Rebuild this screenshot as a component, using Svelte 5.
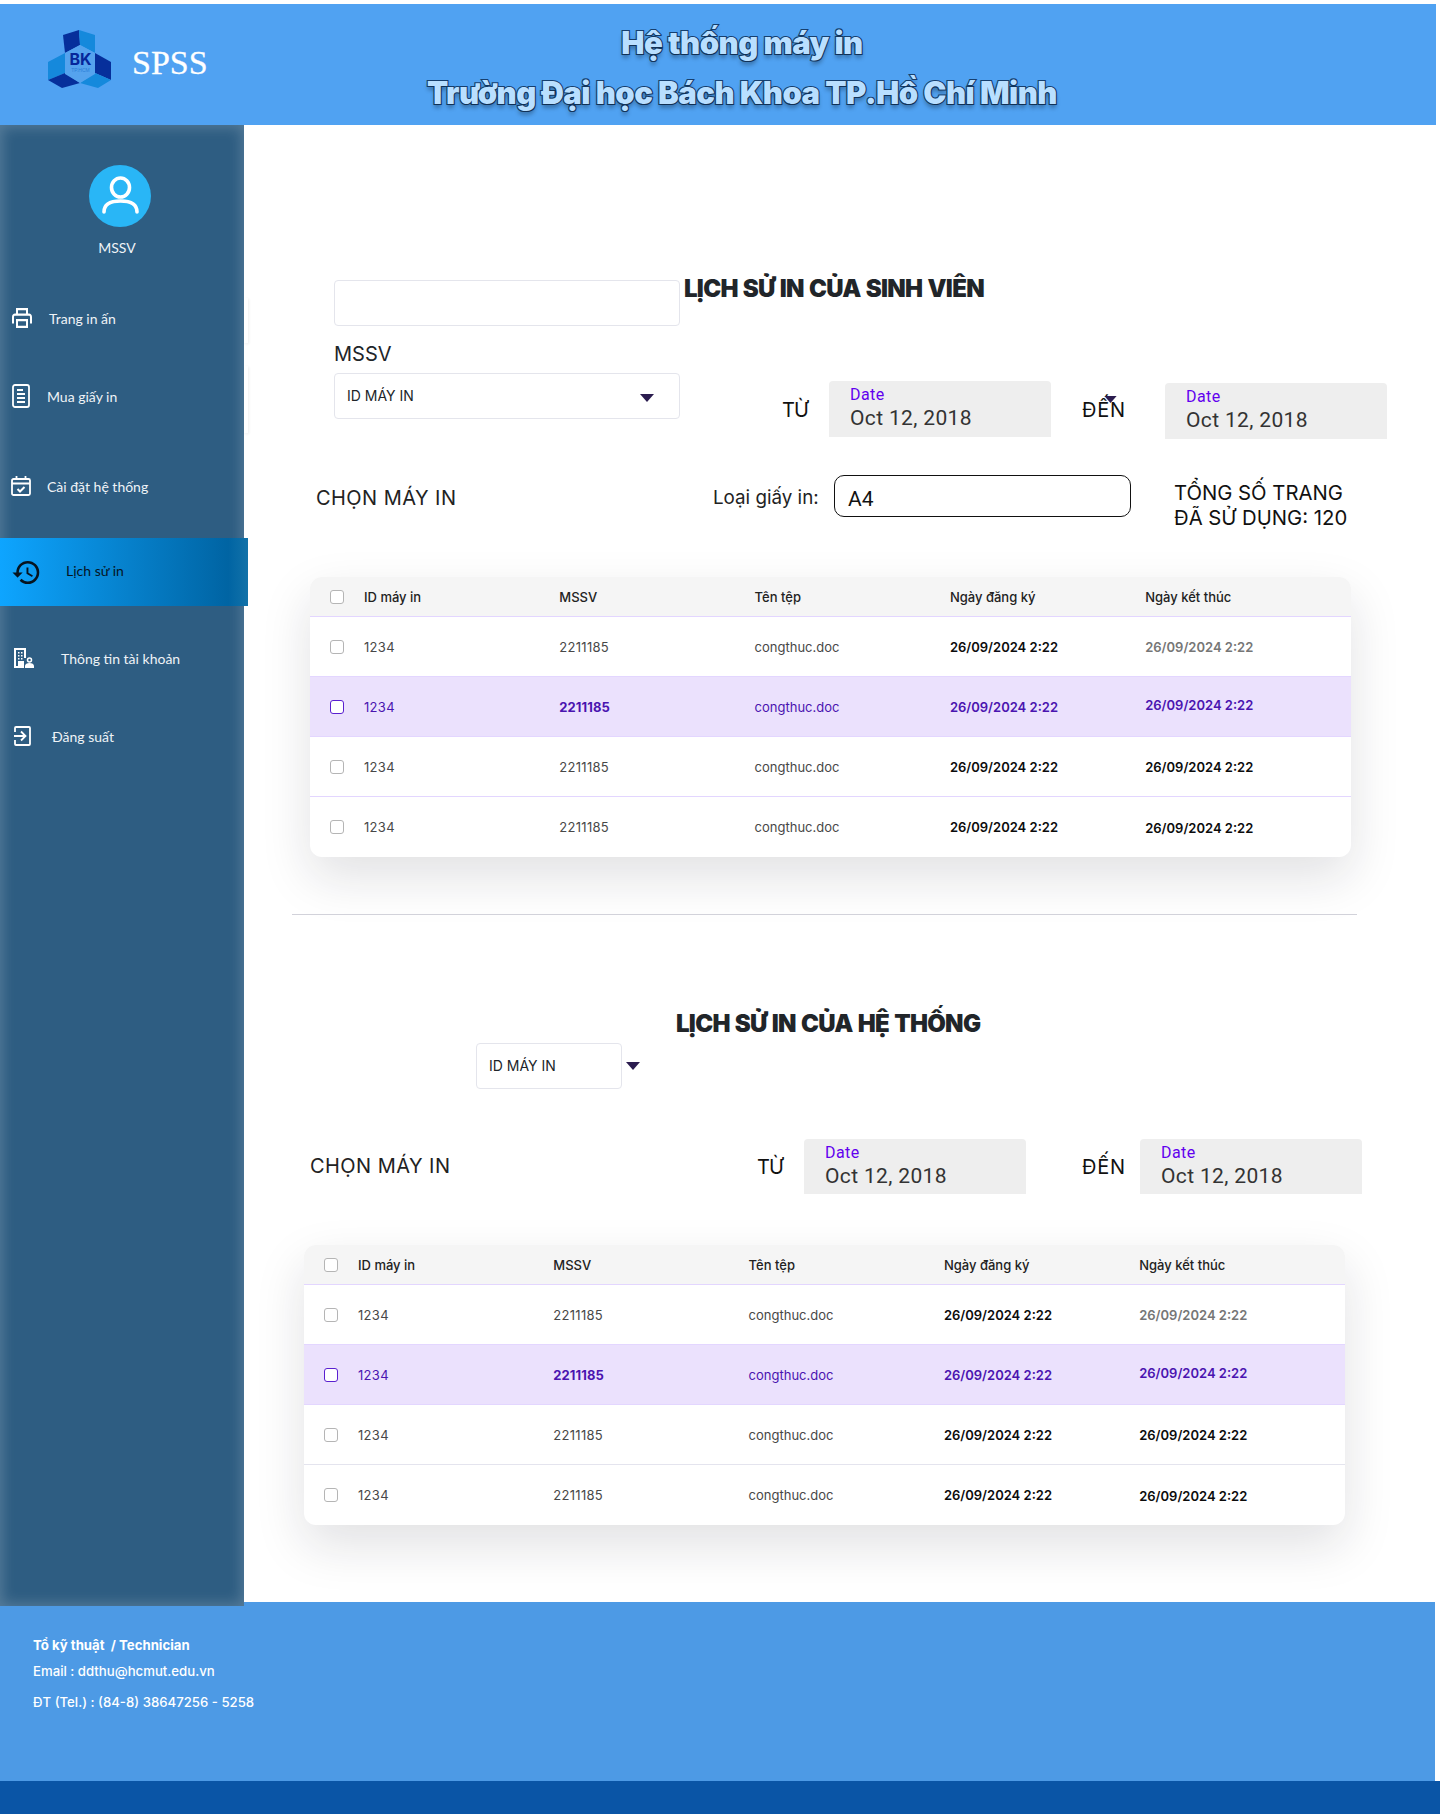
<script>
  const rows = [
    { active: false, endClass: "muted" },
    { active: true, endClass: "up" },
    { active: false, endClass: "" },
    { active: false, endClass: "down" },
  ];
  const columns = ["ID máy in", "MSSV", "Tên tệp", "Ngày đăng ký", "Ngày kết thúc"];
</script>

{#snippet dateField(cls)}
  <div class="date {cls}">
    <span class="date-label">Date</span>
    <span class="date-value">Oct 12, 2018</span>
  </div>
{/snippet}

{#snippet caret()}
  <svg class="caret" viewBox="0 0 14 8" width="14" height="8"><path d="M0 0h14L7 8z" /></svg>
{/snippet}

{#snippet historyTable(cls)}
  <div class="table {cls}">
    <div class="row head">
      <span class="check"></span>
      {#each columns as col}
        <span class="cell">{col}</span>
      {/each}
    </div>
    {#each rows as row}
      <div class="row" class:active={row.active}>
        <span class="check"></span>
        <span class="cell num">1234</span>
        <span class="cell num" class:strong={row.active}>2211185</span>
        <span class="cell">congthuc.doc</span>
        <span class="cell date-cell">26/09/2024 2:22</span>
        <span class="cell date-cell {row.endClass}">26/09/2024 2:22</span>
      </div>
    {/each}
  </div>
{/snippet}

<div class="page">
  <header class="topbar">
    <div class="brand">
      <svg class="logo" viewBox="0 0 63 58" width="63" height="58">
        <polygon points="15,5 31,0 32,15 17,23" fill="#062f9b" />
        <polygon points="31,0 47,5 47,23 32,15" fill="#1589dc" />
        <polygon points="17,23 0,32 0,50 17,43" fill="#1589dc" />
        <polygon points="47,23 63,32 63,50 47,43" fill="#062f9b" />
        <polygon points="0,50 14,58 32,53 17,43" fill="#062f9b" />
        <polygon points="63,50 50,58 32,53 47,43" fill="#1589dc" />
        <polygon points="32,15 47,23 47,44 32,53 17,44 17,23" fill="#55a3ee" />
        <text x="32.5" y="35" class="logo-bk">BK</text>
        <text x="32.5" y="42" class="logo-sub">TP.HCM</text>
      </svg>
      <span class="brand-name">SPSS</span>
    </div>
    <h1 class="system-title">Hệ thống máy in<br />Trường Đại học Bách Khoa TP.Hồ Chí Minh</h1>
  </header>

  <div class="content">
    <aside class="sidebar">
      <div class="ghost ghost-a"></div>
      <div class="ghost ghost-b"></div>
      <div class="profile">
        <div class="avatar">
          <svg viewBox="0 0 62 62" width="62" height="62" fill="none" stroke="#fff" stroke-width="3.6" stroke-linecap="round">
            <ellipse cx="31.5" cy="22.5" rx="9" ry="9.5" />
            <path d="M15 47c0-8 6-11 16.500-11S48 39 48 47" />
          </svg>
        </div>
        <span class="profile-name">MSSV</span>
      </div>

      <nav class="nav">
        <a class="nav-item print" href="#/print">
          <svg viewBox="2 3 20 18" width="20" height="20" preserveAspectRatio="none" fill="#fff"><path d="M19 8h-1V3H6v5H5c-1.660 0-3 1.340-3 3v6h4v4h12v-4h4v-6c0-1.660-1.340-3-3-3zM8 5h8v3H8V5zm8 14H8v-4h8v4zm2-2v-4H6v4H4v-6c0-.550.450-1 1-1h14c.550 0 1 .450 1 1v6h-2z" /></svg>
          <span>Trang in ấn</span>
        </a>
        <a class="nav-item buy" href="#/buy">
          <svg viewBox="0 0 18 24" width="18" height="24" fill="none" stroke="#fff" stroke-width="1.800"><rect x="1" y="1" width="16" height="22" rx="2" /><path d="M5 6h6M5 10h8M5 14h8M5 18h8" /></svg>
          <span>Mua giấy in</span>
        </a>
        <a class="nav-item settings" href="#/settings">
          <svg viewBox="0 0 20 20" width="20" height="20" fill="none" stroke="#fff" stroke-width="1.800"><rect x="1" y="3" width="18" height="16" rx="1.500" /><path d="M1 7.500h18M5.500 0v4M14.500 0v4" /><path d="M6.500 13l2.500 2.500 4.500-4.500" stroke-width="2" /></svg>
          <span>Cài đặt hệ thống</span>
        </a>
        <a class="nav-item history current" href="#/history">
          <svg viewBox="1 3 22 18" width="29" height="23" fill="#06141f"><path d="M13 3a9 9 0 0 0-9 9H1l3.890 3.890.070.140L9 12H6c0-3.870 3.130-7 7-7s7 3.130 7 7-3.130 7-7 7c-1.930 0-3.680-.790-4.940-2.060l-1.420 1.420A8.954 8.954 0 0 0 13 21a9 9 0 0 0 0-18zm-1 5v5l4.280 2.540.720-1.210-3.500-2.080V8H12z" /></svg>
          <span>Lịch sử in</span>
        </a>
        <a class="nav-item account" href="#/account">
          <svg viewBox="0 0 20 20" width="20" height="20" fill="#fff"><path d="M0 0h12v10h-2V2H2v16h2v-5h6v7H0z" /><path d="M4 4h1.500v1.500H4zM7 4h1.500v1.500H7zM4 7h1.500v1.500H4zM7 7h1.500v1.500H7zM4 10h1.500v1.500H4zM7 10h1.500v1.500H7z" /><circle cx="15.500" cy="12" r="2" fill="none" stroke="#fff" stroke-width="1.500" /><path d="M11 20v-2c0-2 2-3 4.500-3s4.500 1 4.500 3v2z" /></svg>
          <span>Thông tin tài khoản</span>
        </a>
        <a class="nav-item logout" href="#/logout">
          <svg viewBox="0 0 17 20" width="17" height="20" fill="none" stroke="#fff" stroke-width="1.800"><path d="M1 6V2a1 1 0 0 1 1-1h13a1 1 0 0 1 1 1v16a1 1 0 0 1-1 1H2a1 1 0 0 1-1-1v-4" /><path d="M0 10h11M7 5.500l4.500 4.500L7 14.500" /></svg>
          <span>Đăng suất</span>
        </a>
      </nav>
    </aside>

    <main class="main">
      <section class="student-top">
        <div class="student-fields">
          <div class="blank-box"></div>
          <span class="mssv-label">MSSV</span>
          <div class="select wide">
            <span>ID MÁY IN</span>
            {@render caret()}
          </div>
        </div>
        <div class="student-side">
          <h2 class="section-title">LỊCH SỬ IN CỦA SINH VIÊN</h2>
          <div class="date-row">
            <span class="range-label from">TỪ</span>
            {@render dateField("")}
            <span class="range-label to">ĐẾN{@render caret()}</span>
            {@render dateField("lower")}
          </div>
        </div>
      </section>

      <section class="paper-row">
        <span class="pick-label">CHỌN MÁY IN</span>
        <span class="paper-label">Loại giấy in:</span>
        <div class="paper-input">A4</div>
        <p class="total">TỔNG SỐ TRANG<br />ĐÃ SỬ DỤNG: 120</p>
      </section>

      {@render historyTable("table-one")}

      <hr class="divider" />

      <h2 class="section-title system">LỊCH SỬ IN CỦA HỆ THỐNG</h2>
      <div class="system-select">
        <div class="select narrow"><span>ID MÁY IN</span></div>
        {@render caret()}
      </div>

      <section class="system-row">
        <span class="pick-label">CHỌN MÁY IN</span>
        <span class="range-label from">TỪ</span>
        {@render dateField("")}
        <span class="range-label to-two">ĐẾN</span>
        {@render dateField("")}
      </section>

      {@render historyTable("table-two")}
    </main>
  </div>

  <footer class="footer">
    <div class="footer-main">
      <p class="footer-head">Tổ kỹ thuật &nbsp;/ Technician</p>
      <p class="footer-mail">Email : ddthu@hcmut.edu.vn</p>
      <p class="footer-tel">ĐT (Tel.) : (84-8) 38647256 - 5258</p>
    </div>
    <div class="footer-band"></div>
  </footer>
</div>

<style>
  :global(body) {
    margin: 0;
    background: #fff;
    font-family: Inter, "Liberation Sans", sans-serif;
  }

  .page {
    width: 1440px;
    padding-top: 4px;
    box-sizing: border-box;
    overflow: hidden;
  }

  /* header */
  .topbar {
    width: 1436px;
    height: 121px;
    background: #50a2f2;
    position: relative;
    display: flex;
    align-items: center;
  }

  .brand {
    display: flex;
    align-items: center;
    margin-left: 48px;
    gap: 21px;
    margin-top: -11px;
  }

  .logo-bk {
    font: 700 16px Inter, sans-serif;
    fill: #06269a;
    text-anchor: middle;
  }

  .logo-sub {
    font: 400 5px "Liberation Sans", sans-serif;
    fill: #2b7fd8;
    text-anchor: middle;
  }

  .brand-name {
    font: 400 34px "Liberation Serif", serif;
    color: #fff;
    margin-top: 7px;
    -webkit-text-stroke: 0.3px #fff;
  }

  .system-title {
    position: absolute;
    left: 0;
    right: 0;
    margin: 0;
    top: 14px;
    padding-left: 48px;
    text-align: center;
    font-size: 31px;
    font-weight: 900;
    line-height: 50px;
    letter-spacing: -0.5px;
    color: #b9dfff;
    -webkit-text-stroke: 2.2px #163f6e;
    paint-order: stroke fill;
    text-shadow: 0 4px 4px rgba(0, 0, 0, 0.3);
  }

  .content {
    display: flex;
    align-items: stretch;
  }

  /* sidebar */
  .sidebar {
    width: 244px;
    flex: none;
    margin-bottom: -4px;
    position: relative;
    z-index: 1;
    background: #2e5d82;
    box-shadow: inset 0 0 14px 2px rgba(255, 255, 255, 0.2);
    color: #eef3f7;
    font-family: Lato, sans-serif;
  }

  .ghost {
    position: absolute;
    left: 244px;
    width: 4px;
    background: #fff;
    box-shadow: 1px 1px 3px rgba(0, 0, 0, 0.07);
  }

  .ghost-a {
    top: 173px;
    height: 45px;
  }

  .ghost-b {
    top: 241px;
    height: 67px;
  }

  .profile {
    display: flex;
    flex-direction: column;
    align-items: center;
    padding: 40px 4px 0 0;
  }

  .avatar {
    width: 62px;
    height: 62px;
    border-radius: 50%;
    background: #29b6f6;
  }

  .avatar svg {
    display: block;
  }

  .profile-name {
    font-size: 14px;
    line-height: 18px;
    margin-top: 12px;
    margin-right: 6px;
  }

  .nav {
    display: flex;
    flex-direction: column;
    margin-top: 41px;
  }

  .nav-item {
    display: flex;
    align-items: center;
    height: 40px;
    font-size: 14px;
    color: #eef3f7;
    text-decoration: none;
  }

  .print {
    gap: 17px;
    padding-left: 12px;
  }

  .buy {
    gap: 17px;
    padding-left: 12px;
    margin-top: 38px;
  }

  .settings {
    gap: 16px;
    padding-left: 11px;
    margin-top: 50px;
  }

  .history {
    width: 248px;
    height: 68px;
    gap: 25px;
    padding-left: 12px;
    margin-top: 32px;
    box-sizing: border-box;
    background: linear-gradient(90deg, #0ea5ff 0%, #0064a3 92%, #1272a9 100%);
    color: #06141f;
  }

  .history span {
    margin-top: -4px;
  }

  .account {
    gap: 27px;
    padding-left: 14px;
    margin-top: 32px;
  }

  .logout {
    gap: 21px;
    padding-left: 14px;
    margin-top: 38px;
  }

  /* main column */
  .main {
    flex: 1;
    min-width: 0;
    padding-top: 145px;
    padding-bottom: 77px;
    color: #212529;
  }

  .student-top {
    display: flex;
    align-items: flex-start;
    padding-left: 90px;
  }

  .student-fields {
    width: 346px;
    padding-top: 10px;
    flex: none;
  }

  .blank-box,
  .select {
    border: 1px solid #e4e5ec;
    border-radius: 4px;
    box-sizing: border-box;
    height: 46px;
    background: #fff;
  }

  .mssv-label {
    display: block;
    font-size: 20px;
    line-height: 24px;
    padding-top: 1px;
    margin-top: 15px;
    margin-bottom: 7px;
  }

  .select {
    display: flex;
    align-items: center;
    justify-content: space-between;
    padding: 0 25px 0 12px;
    font-size: 14px;
  }

  .select span {
    margin-top: -1px;
  }

  .caret {
    display: block;
    fill: #2b1c4f;
  }

  .wide .caret {
    margin-top: 4px;
  }

  .student-side {
    flex: 1;
    padding-left: 4px;
  }

  .section-title {
    margin: 0;
    font-size: 24px;
    line-height: 36px;
    font-weight: 900;
    letter-spacing: -0.7px;
    word-spacing: 1px;
    white-space: nowrap;
    color: #212529;
    padding-top: 1px;
    height: 35px;
  }

  .date-row {
    display: flex;
    align-items: flex-start;
    margin-top: 75px;
    margin-left: -4px;
    padding-left: 102px;
  }

  .range-label {
    font-size: 20px;
    color: #111;
    height: 56px;
    display: flex;
    align-items: center;
    flex: none;
    position: relative;
    padding-top: 1px;
    box-sizing: border-box;
  }

  .range-label.from {
    width: 47px;
    letter-spacing: -1px;
  }

  .range-label.to {
    width: 83px;
    margin-left: 31px;
    letter-spacing: 0.8px;
  }

  .range-label.to .caret {
    position: absolute;
    left: 22px;
    top: 15px;
    width: 13px;
    height: 7px;
  }

  .to-two {
    width: 58px;
    margin-left: 56px;
    letter-spacing: 0.8px;
  }

  .date {
    width: 222px;
    height: 56px;
    flex: none;
    box-sizing: border-box;
    padding: 5px 0 0 21px;
    background: #eee;
    border-radius: 4px 4px 0 0;
    font-family: Roboto, sans-serif;
    display: flex;
    flex-direction: column;
  }

  .date.lower {
    margin-top: 2px;
  }

  .date-label {
    font-size: 16px;
    line-height: 18px;
    letter-spacing: 0.4px;
    color: #6200ee;
  }

  .date-value {
    font-size: 21px;
    line-height: 29px;
    letter-spacing: 0.35px;
    color: #333;
  }

  .paper-row {
    display: flex;
    align-items: flex-start;
    margin-top: 36px;
    padding-left: 72px;
  }

  .pick-label {
    font-size: 20px;
    line-height: 42px;
    letter-spacing: 0.45px;
    color: #222;
    flex: none;
  }

  .paper-row .pick-label {
    width: 397px;
    padding-top: 2px;
  }

  .paper-label {
    width: 121px;
    flex: none;
    font-size: 18.800px;
    line-height: 44px;
    padding-top: 1px;
    color: #222;
  }

  .paper-input {
    width: 297px;
    height: 42px;
    flex: none;
    box-sizing: border-box;
    padding: 5px 0 0 13px;
    border: 1.500px solid #111;
    border-radius: 10px;
    font-size: 21px;
    line-height: 36px;
    color: #111;
    font-family: Roboto, sans-serif;
  }

  .total {
    margin: 5px 0 0 43px;
    font-size: 20.300px;
    line-height: 25px;
    color: #111;
    white-space: nowrap;
  }

  /* tables */
  .table {
    width: 1041px;
    border-radius: 12px;
    background: #fff;
    box-shadow: 0 20px 50px rgba(20, 20, 40, 0.13);
    font-size: 13px;
    overflow: hidden;
  }

  .table-one {
    margin: 47px 0 0 66px;
  }

  .table-two {
    margin: 51px 0 0 60px;
  }

  .row {
    display: grid;
    grid-template-columns: 54px repeat(5, 195.3px);
    align-items: center;
    height: 60px;
    box-sizing: border-box;
    border-top: 1px solid #e3d6ff;
    color: #484848;
  }

  .row:last-child {
    height: 61px;
    padding-bottom: 1px;
  }

  .row.head {
    height: 39px;
    border-top: 0;
    background: #f5f5f5;
    color: #222;
    font-weight: 500;
  }

  .row.active {
    background: #ebe1fd;
    color: #4a14b0;
  }

  .table-two .row:last-child {
    border-top-color: #e4e4ee;
  }

  .check {
    width: 14px;
    height: 14px;
    margin-left: 20px;
    border: 1px solid #b5b5b5;
    border-radius: 3px;
    background: #fff;
    box-sizing: border-box;
  }

  .active .check {
    border-color: #5a1fd0;
  }

  .cell {
    white-space: nowrap;
  }

  .num {
    letter-spacing: 0.3px;
  }

  .strong {
    font-weight: 700;
    letter-spacing: 0.1px;
  }

  .date-cell {
    font-weight: 600;
    color: #0c0c0c;
  }

  .active .date-cell {
    color: #4a14b0;
  }

  .date-cell.muted {
    color: #767676;
  }

  .date-cell.up {
    margin-bottom: 4px;
  }

  .date-cell.down {
    margin-top: 2px;
  }

  .divider {
    margin: 57px 0 0 48px;
    width: 1065px;
    height: 1px;
    border: 0;
    background: #d2d2da;
  }

  .section-title.system {
    margin: 89px 0 0 432px;
    padding-top: 2px;
  }

  .system-select {
    display: flex;
    align-items: center;
    gap: 4px;
    margin: 2px 0 0 232px;
  }

  .narrow {
    width: 146px;
  }

  .system-row {
    display: flex;
    align-items: center;
    margin-top: 50px;
    padding-left: 66px;
  }

  .system-row .date,
  .system-row .range-label {
    height: 55px;
  }

  .system-row .pick-label {
    width: 447px;
    margin-top: -2px;
  }

  .system-row .from {
    width: 47px;
  }

  /* footer */
  .footer-main {
    width: 1435px;
    height: 179px;
    box-sizing: border-box;
    padding: 34px 0 0 33px;
    background: #4d9ae5;
    color: #fff;
    font-size: 13.200px;
  }

  .footer-main p {
    margin: 0;
    line-height: 18px;
  }

  .footer-head {
    font-weight: 700;
  }

  .footer-mail {
    margin-top: 8px !important;
    font-weight: 500;
  }

  .footer-tel {
    margin-top: 13px !important;
    font-weight: 500;
  }

  .footer-band {
    height: 33px;
    background: #0a55a6;
  }
</style>
